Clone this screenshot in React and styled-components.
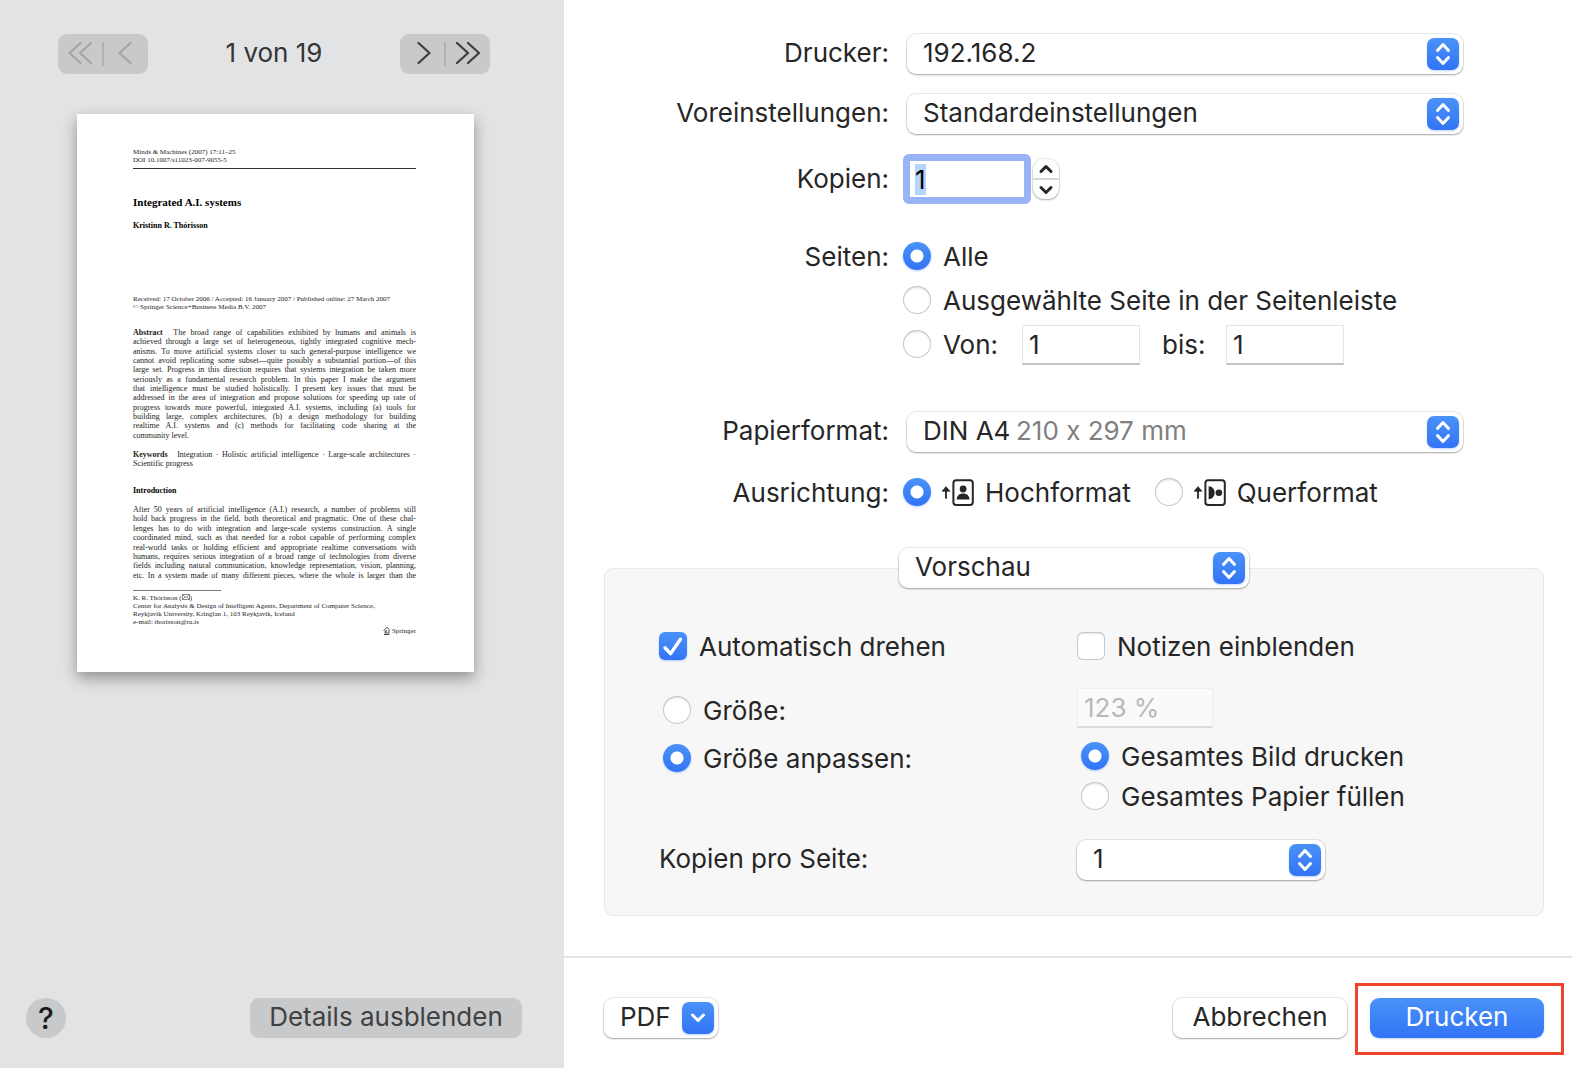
import React from 'react';
import styled, { createGlobalStyle, css } from 'styled-components';

const GlobalStyle = createGlobalStyle`
  * {
    box-sizing: border-box;
  }
  body {
    margin: 0;
    background: #ffffff;
    color: #262626;
    font-family: Inter, "Liberation Sans", sans-serif;
    font-size: 26px;
    line-height: 32px;
    font-feature-settings: "calt" 0;
  }
  button, input, select {
    font: inherit;
    font-feature-settings: inherit;
    color: inherit;
    margin: 0;
  }
`;

const blue = 'linear-gradient(#4a92f8, #3274f6)';

const Dialog = styled.div`
  display: grid;
  grid-template-columns: 47fr 84fr;
  min-height: 100vh;
`;

/* preview side */

const Sidebar = styled.aside`
  display: flex;
  flex-direction: column;
  min-width: 0;
  background: #e2e3e5;
`;

const Pager = styled.nav`
  display: flex;
  align-items: center;
  justify-content: space-between;
  padding: 34px 74px 40px 58px;
`;

const PagerGroup = styled.div`
  display: flex;
  align-items: center;
  width: 90px;
  height: 40px;
  border-radius: 9px;
  background: #c8c9cb;
`;

const PagerDivider = styled.span`
  width: 2px;
  height: 24px;
  background: #b0b1b3;
`;

const PagerButton = styled.button`
  flex: 1;
  display: flex;
  align-items: center;
  justify-content: center;
  height: 40px;
  padding: 0 0 2px;
  border: none;
  background: none;
  color: ${props => (props.disabled ? '#a4a5a7' : '#3c3d3e')};
`;

const PageCount = styled.span`
  padding-bottom: 2px;
  color: #343536;
`;

const Paper = styled.article`
  display: flex;
  flex-direction: column;
  min-height: 558px;
  margin: 0 90px 0 77px;
  padding: 34px 58px 34px 56px;
  background: #ffffff;
  color: #1c1c1c;
  box-shadow: 0 6px 14px rgba(0, 0, 0, 0.36);
  font-family: "Liberation Serif", "Times New Roman", serif;
  font-size: 8px;
  line-height: 9px;
`;

const SmallPrint = styled.div`
  display: grid;
  grid-auto-rows: 1fr;
  height: ${props => props.$height}px;
  font-size: 7px;
  line-height: 8px;
  white-space: nowrap;
`;

const PaperRule = styled.hr`
  width: ${props => (props.$short ? '88px' : '100%')};
  height: 1px;
  margin: ${props => (props.$short ? '10px 0 3px' : '4px 0 26px')};
  border: none;
  background: ${props => (props.$short ? '#777777' : '#333333')};
`;

const PaperTitle = styled.h1`
  margin: 0;
  font-size: 11px;
  line-height: 14px;
  color: #000000;
`;

const PaperAuthor = styled.p`
  margin: 12px 0 64px;
  font-weight: 700;
  line-height: 10px;
  color: #000000;
`;

const PaperText = styled.div`
  display: grid;
  grid-auto-rows: 1fr;
  height: ${props => props.$height}px;
  margin-top: ${props => props.$gap}px;
  white-space: nowrap;
`;

const TextLine = styled.span`
  display: block;
  text-align: justify;
  text-align-last: ${props => (props.$ragged ? 'left' : 'justify')};

  b {
    margin-right: 6px;
  }
`;

const PaperHeading = styled.h2`
  margin: 18px 0 0;
  font-size: 8px;
  line-height: 10px;
  color: #000000;
`;

const Publisher = styled.div`
  display: flex;
  justify-content: flex-end;
  align-items: center;
  gap: 2px;
  margin-top: 3px;
  font-size: 7px;
  line-height: 8px;
`;

const SidebarFooter = styled.div`
  display: flex;
  justify-content: space-between;
  margin-top: auto;
  padding: 30px 42px 30px 26px;
`;

const HelpButton = styled.button`
  width: 40px;
  height: 40px;
  padding: 0;
  border: none;
  border-radius: 50%;
  background: #c8c9cb;
  color: #1c1c1c;
  font-size: 30px;
  font-weight: 500;
`;

const DetailsButton = styled.button`
  width: 272px;
  height: 40px;
  padding: 0 0 2px;
  border: none;
  border-radius: 9px;
  background: #c8c9cb;
  color: #404142;
`;

/* settings side */

const Main = styled.form`
  display: flex;
  flex-direction: column;
  min-width: 0;
`;

const Settings = styled.div`
  display: flex;
  flex-direction: column;
  gap: 20px;
  padding: 34px 105px 36px 40px;
`;

const Row = styled.div`
  display: grid;
  grid-template-columns: 285fr 564fr;
  align-items: ${props => (props.$top ? 'start' : 'center')};
  gap: 14px;
  min-height: 40px;
  margin: ${props => (props.$top ? '10px 0 26px' : '0')};
`;

const RowLabel = styled.label`
  padding: ${props => props.$pad || '0 0 2px'};
  text-align: right;
  white-space: nowrap;
`;

const raised = css`
  border-radius: 9px;
  background: #ffffff;
  box-shadow: 0 0 0 1px rgba(0, 0, 0, 0.07), 0 1px 2px rgba(0, 0, 0, 0.3);
`;

const SelectBox = styled.div`
  ${raised}
  position: relative;
  width: ${props => props.$width || 'auto'};
  height: 40px;
  margin: ${props => (props.$inset ? '0 4px' : '0')};
`;

const NativeSelect = styled.select`
  display: block;
  width: 100%;
  height: 40px;
  padding: 0 44px 2px 16px;
  border: none;
  outline: none;
  appearance: none;
  background: none;
`;

const SelectHint = styled.span`
  position: absolute;
  left: 109px;
  top: 3px;
  color: #808080;
  pointer-events: none;
`;

const Cap = styled.span`
  display: flex;
  align-items: center;
  justify-content: center;
  width: 32px;
  height: 32px;
  border-radius: 7px;
  background: ${blue};
  box-shadow: 0 1px 2px rgba(50, 116, 246, 0.3);
`;

const SelectCap = styled(Cap)`
  position: absolute;
  top: 4px;
  right: 4px;
  pointer-events: none;
`;

const Copies = styled.div`
  display: flex;
  align-items: center;
  gap: 2px;
`;

const CopiesInput = styled.input`
  width: 128px;
  height: 50px;
  padding: 0 5px;
  border: 7px solid #98b3f6;
  border-radius: 6px;
  outline: none;
  background: #ffffff;
  color: #000000;

  &::selection {
    background: #b3d6fd;
    color: #000000;
  }
`;

const Stepper = styled.div`
  ${raised}
  display: flex;
  flex-direction: column;
  width: 26px;
  height: 40px;
  border-radius: 11px;
`;

const StepButton = styled.button`
  flex: 1;
  display: flex;
  align-items: center;
  justify-content: center;
  padding: 0;
  border: none;
  background: none;

  & + & {
    border-top: 2px solid #d8d8d8;
  }
`;

const Choices = styled.div`
  display: flex;
  flex-direction: column;
`;

const ChoiceLine = styled.div`
  display: flex;
  align-items: center;
  height: 44px;
`;

const Choice = styled.label`
  display: flex;
  align-items: flex-start;
  gap: ${props => props.$gap || 12}px;
  min-width: ${props => props.$width || 'auto'};
  height: 28px;
  margin-left: ${props => (props.$indent ? '4px' : '0')};
  line-height: 30px;
  white-space: nowrap;
`;

const Radio = styled.input.attrs({ type: 'radio' })`
  flex: none;
  width: 28px;
  height: 28px;
  appearance: none;
  border-radius: 50%;
  background: #ffffff;
  box-shadow: inset 0 0 0 1px #c8c8c8, inset 0 2px 2px rgba(0, 0, 0, 0.12);

  &:checked {
    background: radial-gradient(circle, #ffffff 6px, transparent 7px), ${blue};
    box-shadow: 0 1px 2px rgba(50, 116, 246, 0.35);
  }
`;

const CheckWrap = styled.span`
  position: relative;
  display: flex;

  svg {
    position: absolute;
    inset: 0;
    pointer-events: none;
  }
`;

const Checkbox = styled.input.attrs({ type: 'checkbox' })`
  width: 28px;
  height: 28px;
  appearance: none;
  border-radius: 6px;
  background: #ffffff;
  box-shadow: inset 0 0 0 1px #c8c8c8, inset 0 2px 2px rgba(0, 0, 0, 0.1);

  &:checked {
    background: ${blue};
    box-shadow: 0 1px 2px rgba(50, 116, 246, 0.35);
  }
  & + svg {
    display: none;
  }
  &:checked + svg {
    display: block;
  }
`;

const TextInput = styled.input`
  width: ${props => props.$width};
  height: 40px;
  padding: 0 6px;
  border: 1px solid #e4e4e4;
  border-bottom: 2px solid #c4c4c4;
  outline: none;
  background: #ffffff;

  &:disabled {
    border-color: #eeeeee;
    border-bottom-color: #dcdcdc;
    background: #fafafa;
    color: #b8b8b8;
  }
`;

const PageRange = styled.div`
  display: flex;
  align-items: center;
  padding-top: 2px;
`;

const ToLabel = styled.label`
  width: 64px;
  margin-left: 22px;
`;

const Orientation = styled.div`
  display: flex;
  gap: 24px;
`;

const Group = styled.fieldset`
  min-width: 0;
  margin: 0 28px 40px 40px;
  padding: 44px 0 35px;
  border: 1px solid #e9e9e9;
  border-radius: 9px;
  background: #f7f7f7;
`;

const GroupLegend = styled.legend`
  margin: 0 auto;
  padding: 0;
`;

const GroupGrid = styled.div`
  display: grid;
  grid-template-columns: 418fr 466fr;
  align-items: start;
  padding-left: 54px;
`;

const GroupCell = styled.div`
  display: flex;
  flex-direction: column;
  gap: ${props => props.$gap}px;
  padding: ${props => props.$pad || '0'};
`;

const GroupLabel = styled.label`
  padding: 3px 0 5px;
`;

const Footer = styled.footer`
  display: flex;
  align-items: baseline;
  margin-top: auto;
  padding: 25px 8px 13px 40px;
  border-top: 2px solid #e4e4e4;
`;

const PushButton = styled.button`
  ${raised}
  height: 40px;
  width: ${props => props.$width};
  padding: 0 0 2px;
  border: none;
`;

const PdfButton = styled(PushButton)`
  display: flex;
  align-items: center;
  justify-content: space-between;
  padding: 0 4px 0 16px;
  margin-right: auto;
`;

const PdfText = styled.span`
  padding-bottom: 2px;
`;

const PrintButton = styled(PushButton)`
  display: block;
  background: ${blue};
  color: #ffffff;
  box-shadow: 0 1px 2px rgba(50, 116, 246, 0.3);
`;

const Highlight = styled.div`
  margin-left: 8px;
  padding: 12px 17px 14px 12px;
  border: 3px solid #f0432b;
`;

const Chevrons = ({ paths, width = 24 }) => (
  <svg width={width} height="24" viewBox={`0 0 ${width} 24`} fill="none" stroke="currentColor" strokeWidth="2.2" strokeLinecap="round" strokeLinejoin="round">
    {paths.map(d => <path key={d} d={d} />)}
  </svg>
);

const UpDown = () => (
  <svg width="16" height="24" viewBox="0 0 16 24" fill="none" stroke="#ffffff" strokeWidth="3" strokeLinecap="round" strokeLinejoin="round">
    <path d="M2.500 8.500 8 2.500l5.500 6M2.500 15.500l5.500 6 5.500-6" />
  </svg>
);

const SmallArrow = ({ d, color = '#262626' }) => (
  <svg width="16" height="10" viewBox="0 0 16 10" fill="none" stroke={color} strokeWidth="3" strokeLinecap="round" strokeLinejoin="round">
    <path d={d} />
  </svg>
);

const CheckMark = () => (
  <svg width="28" height="28" viewBox="0 0 28 28" fill="none" stroke="#ffffff" strokeWidth="3.4" strokeLinecap="round" strokeLinejoin="round">
    <path d="M6 15.8l5.600 5.800L21.400 7.200" />
  </svg>
);

const OrientationIcon = ({ landscape }) => (
  <svg width="32" height="28" viewBox="0 -1 32 28" fill="#262626">
    <path d="M4 7.500 8 12.300H0z" stroke="#262626" strokeWidth=".6" strokeLinejoin="round" />
    <path d="M4 11v8" stroke="#262626" strokeWidth="1.8" strokeLinecap="round" />
    <rect x="11.4" y="1.2" width="19.4" height="24.8" rx="2.8" fill="none" stroke="#262626" strokeWidth="2" />
    {landscape ? (
      <>
        <path d="M14.600 7.200c3.800 0 6 3.200 6 6.500s-2.200 6.500-6 6.500z" />
        <circle cx="24.9" cy="13.7" r="3.3" />
      </>
    ) : (
      <>
        <circle cx="21.1" cy="10" r="3.4" />
        <path d="M14.700 20.400c0-3.900 2.900-6 6.400-6s6.400 2.100 6.400 6z" />
      </>
    )}
  </svg>
);

const SpringerIcon = () => (
  <svg width="7" height="8" viewBox="0 0 14 16" fill="none" stroke="#222222" strokeWidth="1.6">
    <path d="M2 15h11M3 12h9V5L9 1 5 3 2 7l2 2 3-2M7 7l-2 5" />
  </svg>
);

const MailIcon = () => (
  <svg width="8" height="6" viewBox="0 0 16 12" fill="none" stroke="#444444" strokeWidth="1.2">
    <path d="M1 1h14v10H1zM1 1l7 6 7-6M1 11l5-5M15 11l-5-5" />
  </svg>
);

const abstractLines = [
  'achieved through a large set of heterogeneous, tightly integrated cognitive mech-',
  'anisms. To move artificial systems closer to such general-purpose intelligence we',
  'cannot avoid replicating some subset—quite possibly a substantial portion—of this',
  'large set. Progress in this direction requires that systems integration be taken more',
  'seriously as a fundamental research problem. In this paper I make the argument',
  'that intelligence must be studied holistically. I present key issues that must be',
  'addressed in the area of integration and propose solutions for speeding up rate of',
  'progress towards more powerful, integrated A.I. systems, including (a) tools for',
  'building large, complex architectures, (b) a design methodology for building',
  'realtime A.I. systems and (c) methods for facilitating code sharing at the'
];

const introLines = [
  'After 50 years of artificial intelligence (A.I.) research, a number of problems still',
  'hold back progress in the field, both theoretical and pragmatic. One of these chal-',
  'lenges has to do with integration and large-scale systems construction. A single',
  'coordinated mind, such as that needed for a robot capable of performing complex',
  'real-world tasks or holding efficient and appropriate realtime conversations with',
  'humans, requires serious integration of a broad range of technologies from diverse',
  'fields including natural communication, knowledge representation, vision, planning,',
  'etc. In a system made of many different pieces, where the whole is larger than the'
];

const Select = ({ id, label, value, hint, width, inset }) => (
  <SelectBox $width={width} $inset={inset}>
    <NativeSelect id={id} aria-label={label} defaultValue={value}>
      <option value={value}>{value}</option>
    </NativeSelect>
    {hint && <SelectHint>{hint}</SelectHint>}
    <SelectCap><UpDown /></SelectCap>
  </SelectBox>
);

const PagePreview = () => (
  <Paper>
    <SmallPrint $height={16}>
      <span>Minds &amp; Machines (2007) 17:11–25</span>
      <span>DOI 10.1007/s11023-007-9055-5</span>
    </SmallPrint>
    <PaperRule />
    <PaperTitle>Integrated A.I. systems</PaperTitle>
    <PaperAuthor>Kristinn R. Thórisson</PaperAuthor>
    <SmallPrint $height={16}>
      <span>Received: 17 October 2006 / Accepted: 16 January 2007 / Published online: 27 March 2007</span>
      <span>© Springer Science+Business Media B.V. 2007</span>
    </SmallPrint>
    <PaperText $height={112} $gap={17}>
      <TextLine><b>Abstract</b> The broad range of capabilities exhibited by humans and animals is</TextLine>
      {abstractLines.map(line => <TextLine key={line}>{line}</TextLine>)}
      <TextLine $ragged>community level.</TextLine>
    </PaperText>
    <PaperText $height={18} $gap={10}>
      <TextLine><b>Keywords</b> Integration · Holistic artificial intelligence · Large-scale architectures ·</TextLine>
      <TextLine $ragged>Scientific progress</TextLine>
    </PaperText>
    <PaperHeading>Introduction</PaperHeading>
    <PaperText $height={75} $gap={9}>
      {introLines.map(line => <TextLine key={line}>{line}</TextLine>)}
    </PaperText>
    <PaperRule $short />
    <SmallPrint $height={30}>
      <span>K. R. Thórisson (<MailIcon />)</span>
      <span>Center for Analysis &amp; Design of Intelligent Agents, Department of Computer Science,</span>
      <span>Reykjavik University, Kringlan 1, 103 Reykjavik, Iceland</span>
      <span>e-mail: thorisson@ru.is</span>
    </SmallPrint>
    <Publisher><SpringerIcon /> Springer</Publisher>
  </Paper>
);

class PrintDialog extends React.Component {
  constructor() {
    super();
    this.copies = React.createRef();
    this.state = {
      copies: '1'
    };
  }

  componentDidMount() {
    this.copies.current.focus();
    this.copies.current.select();
  }

  step(amount) {
    const next = Math.max(1, (parseInt(this.state.copies, 10) || 1) + amount);
    this.setState({ copies: String(next) });
  }

  render() {
    return (
      <Dialog>
        <Sidebar>
          <Pager>
            <PagerGroup>
              <PagerButton disabled aria-label="Erste Seite">
                <Chevrons paths={['M12.500 2 1.500 12l11 10', 'M23 2 12 12l11 10']} />
              </PagerButton>
              <PagerDivider />
              <PagerButton disabled aria-label="Vorherige Seite">
                <Chevrons width={17} paths={['M12.500 2 1.500 12l11 10']} />
              </PagerButton>
            </PagerGroup>
            <PageCount>1 von 19</PageCount>
            <PagerGroup>
              <PagerButton aria-label="Nächste Seite">
                <Chevrons width={17} paths={['M4.500 2l11 10-11 10']} />
              </PagerButton>
              <PagerDivider />
              <PagerButton aria-label="Letzte Seite">
                <Chevrons paths={['M1 2l11 10L1 22', 'M12 2l11 10-11 10']} />
              </PagerButton>
            </PagerGroup>
          </Pager>
          <PagePreview />
          <SidebarFooter>
            <HelpButton>?</HelpButton>
            <DetailsButton>Details ausblenden</DetailsButton>
          </SidebarFooter>
        </Sidebar>

        <Main onSubmit={event => event.preventDefault()}>
          <Settings>
            <Row>
              <RowLabel htmlFor="printer">Drucker:</RowLabel>
              <Select id="printer" value="192.168.2" inset />
            </Row>
            <Row>
              <RowLabel htmlFor="presets">Voreinstellungen:</RowLabel>
              <Select id="presets" value="Standardeinstellungen" inset />
            </Row>
            <Row>
              <RowLabel htmlFor="copies" $pad="0">Kopien:</RowLabel>
              <Copies>
                <CopiesInput
                  id="copies"
                  ref={this.copies}
                  value={this.state.copies}
                  onChange={event => this.setState({ copies: event.target.value })}
                />
                <Stepper>
                  <StepButton type="button" aria-label="Mehr" onClick={() => this.step(1)}>
                    <SmallArrow d="M3 7.500l5-5 5 5" />
                  </StepButton>
                  <StepButton type="button" aria-label="Weniger" onClick={() => this.step(-1)}>
                    <SmallArrow d="M3 2.500l5 5 5-5" />
                  </StepButton>
                </Stepper>
              </Copies>
            </Row>
            <Row $top>
              <RowLabel as="span" $pad="7px 0 5px">Seiten:</RowLabel>
              <Choices>
                <ChoiceLine>
                  <Choice><Radio name="pages" defaultChecked />Alle</Choice>
                </ChoiceLine>
                <ChoiceLine>
                  <Choice><Radio name="pages" />Ausgewählte Seite in der Seitenleiste</Choice>
                </ChoiceLine>
                <ChoiceLine>
                  <Choice $width="119px"><Radio name="pages" />Von:</Choice>
                  <PageRange>
                    <TextInput $width="118px" aria-label="Von" defaultValue="1" />
                    <ToLabel htmlFor="to">bis:</ToLabel>
                    <TextInput $width="118px" id="to" defaultValue="1" />
                  </PageRange>
                </ChoiceLine>
              </Choices>
            </Row>
            <Row>
              <RowLabel htmlFor="paper">Papierformat:</RowLabel>
              <Select id="paper" value="DIN A4" hint="210 x 297 mm" inset />
            </Row>
            <Row>
              <RowLabel as="span" $pad="2px 0 0">Ausrichtung:</RowLabel>
              <Orientation>
                <Choice $gap={11}><Radio name="orientation" defaultChecked /><OrientationIcon />Hochformat</Choice>
                <Choice $gap={11}><Radio name="orientation" /><OrientationIcon landscape />Querformat</Choice>
              </Orientation>
            </Row>
          </Settings>

          <Group>
            <GroupLegend>
              <Select label="Bereich" value="Vorschau" width="350px" />
            </GroupLegend>
            <GroupGrid>
              <Choice>
                <CheckWrap><Checkbox defaultChecked /><CheckMark /></CheckWrap>
                Automatisch drehen
              </Choice>
              <Choice>
                <CheckWrap><Checkbox /><CheckMark /></CheckWrap>
                Notizen einblenden
              </Choice>
              <GroupCell $gap={20} $pad="36px 0 0">
                <Choice $indent><Radio name="scale" />Größe:</Choice>
                <Choice $indent><Radio name="scale" defaultChecked />Größe anpassen:</Choice>
              </GroupCell>
              <GroupCell $gap={14} $pad="28px 0 30px">
                <TextInput $width="136px" aria-label="Größe in Prozent" defaultValue="123 %" disabled />
                <GroupCell $gap={12}>
                  <Choice $indent><Radio name="fit" defaultChecked />Gesamtes Bild drucken</Choice>
                  <Choice $indent><Radio name="fit" />Gesamtes Papier füllen</Choice>
                </GroupCell>
              </GroupCell>
              <GroupLabel htmlFor="perPage">Kopien pro Seite:</GroupLabel>
              <Select id="perPage" value="1" width="248px" />
            </GroupGrid>
          </Group>

          <Footer>
            <PdfButton type="button" $width="114px" aria-haspopup="menu">
              <PdfText>PDF</PdfText>
              <Cap>
                <SmallArrow color="#ffffff" d="M2.500 2l5.500 5.500L13.500 2" />
              </Cap>
            </PdfButton>
            <PushButton type="button" $width="174px">Abbrechen</PushButton>
            <Highlight>
              <PrintButton type="submit" $width="174px">Drucken</PrintButton>
            </Highlight>
          </Footer>
        </Main>
      </Dialog>
    );
  }
}

export default function App() {
  return (
    <>
      <GlobalStyle />
      <PrintDialog />
    </>
  );
}
